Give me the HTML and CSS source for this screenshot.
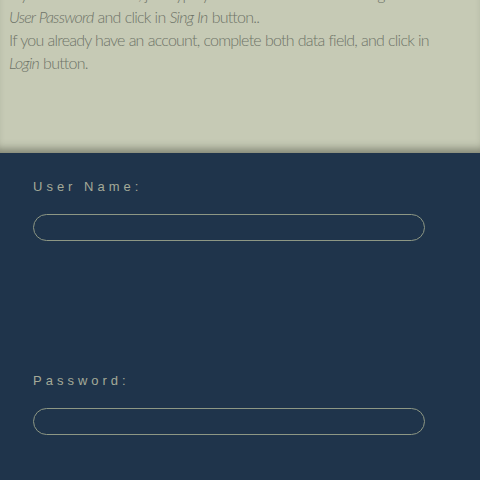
FILE: index.html
```html
<!DOCTYPE html>
<html>
<head>
<meta charset="utf-8">
<link rel="stylesheet" href="styles.css">
</head>
<body>
<section class="intro">
  <p class="intro-text">If you are a new user, just type your User Name and a strong<br>
  <em>User Password</em> and click in <em>Sing In</em> button..<br>
  If you already have an account, complete both data field, and click in<br>
  <em>Login</em> button.</p>
</section>
<section class="login">
  <div class="field">
    <label class="label" for="user">User Name:</label>
    <input class="input" id="user" type="text">
  </div>
  <div class="field">
    <label class="label" for="pass">Password:</label>
    <input class="input" id="pass" type="password">
  </div>
</section>
</body>
</html>
```
FILE: styles.css
```css
html, body {
  margin: 0;
  padding: 0;
  background: #1f344b;
  overflow: hidden;
}
.intro {
  background: #c6cab5;
  height: 153px;
  box-shadow: inset 0 -9px 8px -5px rgba(40, 45, 30, 0.45);
  box-sizing: border-box;
  padding: 0 9px;
  overflow: hidden;
}
.intro-text {
  margin: -18px 0 0 0;
  font-family: "Lato", sans-serif;
  font-weight: 300;
  font-size: 16px;
  line-height: 23px;
  letter-spacing: -0.78px;
  word-spacing: 0.5px;
  color: #6e7468;
  white-space: nowrap;
}
.intro-text em {
  font-style: italic;
}
.login {
  padding: 27px 55px 0 33px;
  display: flex;
  flex-direction: column;
  gap: 133px;
}
.field {
  display: flex;
  flex-direction: column;
  gap: 21px;
}
.label {
  font-family: "Liberation Sans", sans-serif;
  font-size: 13px;
  letter-spacing: 4px;
  color: #a4aa98;
  line-height: 13px;
}
.input {
  box-sizing: border-box;
  width: 392px;
  height: 27px;
  border: 1px solid #8d9784;
  border-radius: 14px;
  background: transparent;
  outline: none;
  margin: 0;
}
```
